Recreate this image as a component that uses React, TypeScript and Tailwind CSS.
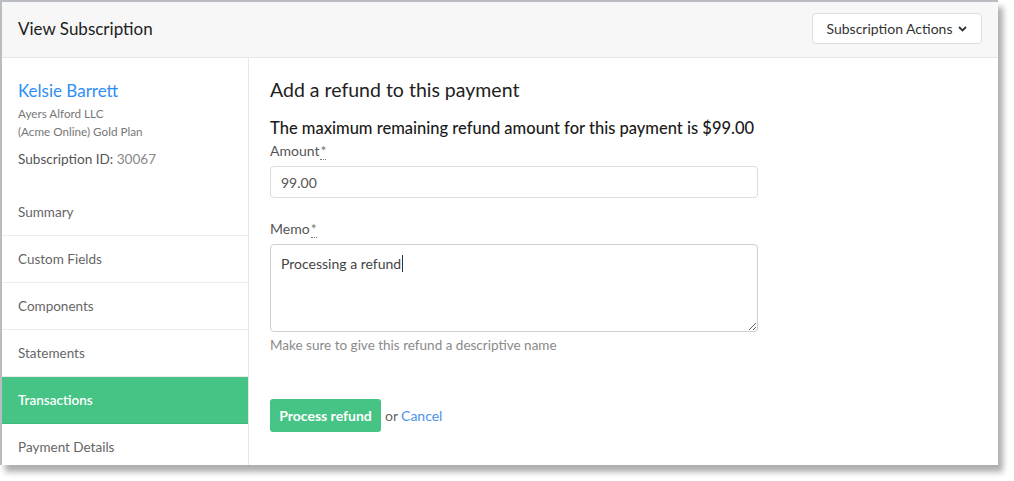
const navItems = [
  "Summary",
  "Custom Fields",
  "Components",
  "Statements",
  "Transactions",
  "Payment Details",
];

const Required = () => (
  <abbr
    title="required"
    className="ml-[1px] text-[#777] no-underline border-b border-dotted border-[#777] leading-none"
  >
    *
  </abbr>
);

const Sidebar = () => (
  <div className="w-[247px] shrink-0 border-r border-[#e8e8e8] bg-white">
    <div className="px-4 pt-[22px]">
      <div className="text-[17px] leading-[22px] text-[#2f8ef4]">Kelsie Barrett</div>
      <div className="mt-[2px] text-[11.7px] leading-[18px] text-[#777]">Ayers Alford LLC</div>
      <div className="text-[11.7px] leading-[18px] text-[#777]">(Acme Online) Gold Plan</div>
      <div className="mt-[9px] text-[13.6px] leading-[20px] text-[#555]">
        Subscription ID: <span className="text-[#888]">30067</span>
      </div>
    </div>
    <div className="mt-[20px]">
      {navItems.map((item) => (
        <div
          key={item}
          className={
            item === "Transactions"
              ? "h-[47px] flex items-center px-4 text-[13.5px] font-semibold text-white bg-[#45c485] border-b border-[#3fb97c]"
              : "h-[47px] flex items-center px-4 text-[13.5px] text-[#666] border-b border-[#ececec]"
          }
        >
          {item}
        </div>
      ))}
    </div>
  </div>
);

const RefundForm = () => (
  <div className="flex-1 pl-[21px] pt-[19px] bg-white">
    <h2 className="text-[19.5px] leading-[26px] text-[#222]">Add a refund to this payment</h2>
    <h3 className="mt-[14px] text-[16.5px] leading-[22px] font-medium text-[#1a1a1a]">
      The maximum remaining refund amount for this payment is $99.00
    </h3>
    <label className="mt-[2px] block text-[14px] leading-[20px] text-[#555]">
      Amount
      <Required />
    </label>
    <input
      defaultValue="99.00"
      className="mt-[5px] block w-[488px] h-[32px] rounded-[4px] border border-[#dcdcdc] px-[10px] text-[14px] text-[#555] outline-none"
    />
    <label className="mt-[21px] block text-[14px] leading-[20px] text-[#555]">
      Memo
      <Required />
    </label>
    <div className="relative mt-[5px] w-[488px]">
      <textarea
        defaultValue="Processing a refund"
        className="block w-[488px] h-[88px] rounded-[4px] border border-[#cfcfcf] px-[10px] pt-[9px] text-[14px] leading-[20px] text-[#444] outline-none"
      />
      <span className="absolute left-[132px] top-[11px] h-[17px] w-[1px] bg-[#333]" />
    </div>
    <div className="mt-[3px] text-[13.5px] leading-[20px] text-[#8a8a8a]">
      Make sure to give this refund a descriptive name
    </div>
    <div className="mt-[44px] flex items-center">
      <button className="h-[33px] w-[111px] rounded-[3px] bg-[#45c485] text-[14px] font-bold text-white">
        Process refund
      </button>
      <span className="ml-[4px] text-[14px] text-[#666]">or</span>
      <a className="ml-[3px] text-[14px] text-[#4a94ea]">Cancel</a>
    </div>
  </div>
);

export default function App() {
  return (
    <div
      className="w-[1014px] h-[481px] bg-white overflow-hidden"
      style={{ fontFamily: "Lato, 'Open Sans', sans-serif" }}
    >
      <div className="w-[998px] h-[465px] border-l-2 border-t-2 border-[#b9bdc2] shadow-[5px_7px_6px_rgba(0,0,0,0.32)] bg-white flex flex-col overflow-hidden">
        <div className="h-[56px] shrink-0 bg-[#f7f7f7] border-b border-[#e6e6e6] flex items-center justify-between pl-4 pr-4 pb-[2px]">
          <div className="text-[17px] text-[#222]">View Subscription</div>
          <button className="h-[31px] w-[170px] rounded-[4px] border border-[#dedede] bg-white flex items-center justify-center gap-[6px] text-[14px] text-[#333]">
            Subscription Actions
            <svg width="9" height="6" viewBox="0 0 9 6" fill="none">
              <path d="M1 1l3.5 3.5L8 1" stroke="#333" strokeWidth="1.8" />
            </svg>
          </button>
        </div>
        <div className="flex flex-1 min-h-0">
          <Sidebar />
          <RefundForm />
        </div>
      </div>
    </div>
  );
}
